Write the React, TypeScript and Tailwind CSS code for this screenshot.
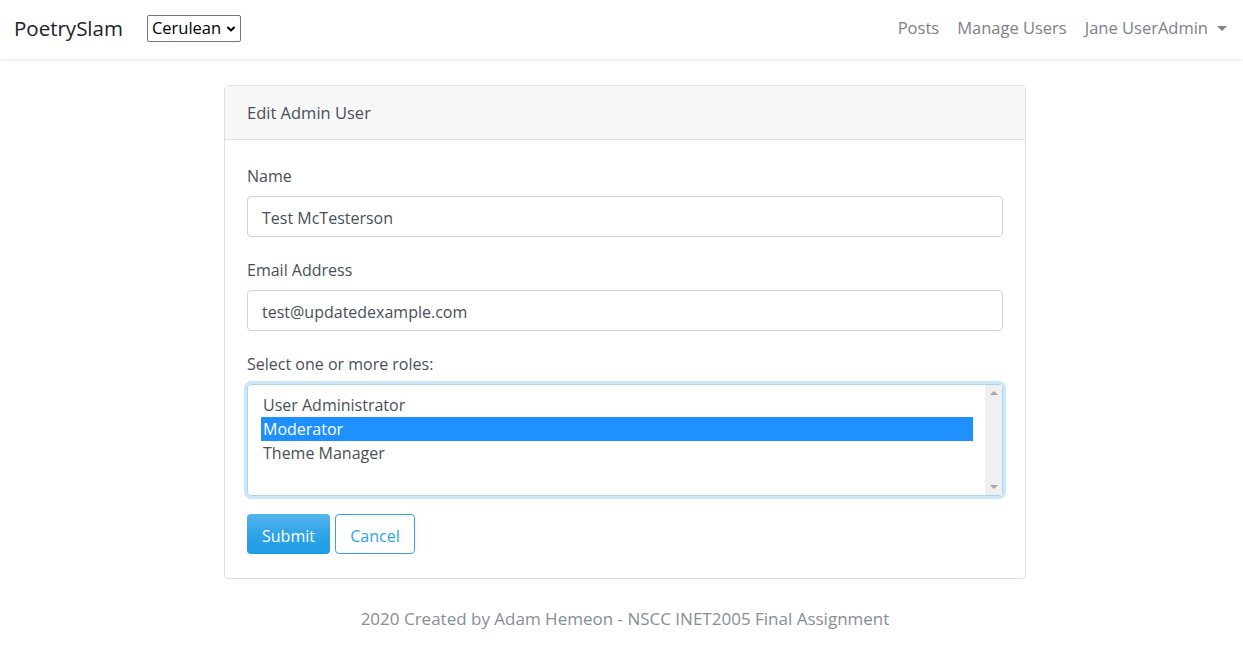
import { ChevronDown } from "lucide-react";

const font = { fontFamily: '"Segoe UI", "Open Sans", sans-serif' };

function Navbar() {
  return (
    <nav className="flex h-[59px] items-center justify-between bg-white px-[14px] pb-[2px] shadow-[0_1px_3px_rgba(0,0,0,0.1)]">
      <div className="flex items-center">
        <span className="text-[20.5px] text-[#222]">PoetrySlam</span>
        <div className="ml-[24px] flex h-[27px] w-[94px] items-center justify-between rounded-[2px] border border-[#767676] pl-[4px] pr-[3px] text-[16.5px] text-black">
          <span>Cerulean</span>
          <ChevronDown size={12} strokeWidth={4} />
        </div>
      </div>
      <div className="flex items-center gap-[18px] pr-[2px] text-[16.5px] text-[#808088]">
        <a>Posts</a>
        <a>Manage Users</a>
        <a className="flex items-center gap-[9px]">
          Jane UserAdmin
          <span className="h-0 w-0 border-x-[5px] border-t-[5px] border-x-transparent border-t-[#808088]" />
        </a>
      </div>
    </nav>
  );
}

function Field({ label, value, top }: { label: string; value: string; top: string }) {
  return (
    <div className={top}>
      <label className="block text-[16px] text-[#495057]">{label}</label>
      <div className="mt-[8px] flex h-[41px] items-center rounded-[4px] border border-[#ced4da] px-[14px] pt-[3px] text-[16px] text-[#495057]">
        {value}
      </div>
    </div>
  );
}

function RolesSelect() {
  const roles = ["User Administrator", "Moderator", "Theme Manager"];
  return (
    <div className="mt-[8px] flex h-[112px] rounded-[4px] border border-[#a1d6f4] shadow-[0_0_0_3px_rgba(47,164,231,0.25)]">
      <div className="flex-1 pl-[13px] pr-[12px] pt-[8px]">
        {roles.map((r, i) => (
          <div
            key={r}
            className={`h-[24px] pl-[2px] text-[16px] leading-[24px] ${
              i === 1 ? "bg-[#1e90ff] text-white" : "text-[#495057]"
            }`}
          >
            {r}
          </div>
        ))}
      </div>
      <div className="flex w-[17px] flex-col items-center justify-between bg-[#f0f0f0] py-[6px]">
        <span className="h-0 w-0 border-x-[4px] border-b-[4px] border-x-transparent border-b-[#a3a3a3]" />
        <span className="h-0 w-0 border-x-[4px] border-t-[4px] border-x-transparent border-t-[#a3a3a3]" />
      </div>
    </div>
  );
}

export default function App() {
  return (
    <div className="min-h-screen bg-white" style={font}>
      <Navbar />
      <main className="flex justify-center pl-[7px] pt-[26px]">
        <div className="w-[802px] rounded-[4px] border border-[#dfdfdf]">
          <div className="flex h-[54px] items-center border-b border-[#dfdfdf] bg-[#f7f7f7] px-[22px] pt-[2px] text-[16.5px] text-[#495057]">
            Edit Admin User
          </div>
          <div className="px-[22px] pb-[24px] pt-[24px]">
            <Field label="Name" value="Test McTesterson" top="" />
            <Field label="Email Address" value="test@updatedexample.com" top="mt-[21px]" />
            <div className="mt-[21px]">
              <label className="block text-[16px] text-[#495057]">Select one or more roles:</label>
              <RolesSelect />
            </div>
            <div className="mt-[18px] flex gap-[5px]">
              <button className="h-[40px] w-[83px] rounded-[4px] bg-gradient-to-b from-[#54b4eb] via-[#2fa4e7] to-[#1d9ce5] pt-[3px] text-[16px] text-white">
                Submit
              </button>
              <button className="h-[40px] w-[80px] rounded-[4px] border border-[#2fa4e7] bg-white pt-[3px] text-[16px] text-[#2fa4e7]">
                Cancel
              </button>
            </div>
          </div>
        </div>
      </main>
      <footer className="pl-[7px] pt-[27px] text-center text-[17px] text-[#868e96]">
        2020 Created by Adam Hemeon - NSCC INET2005 Final Assignment
      </footer>
    </div>
  );
}
